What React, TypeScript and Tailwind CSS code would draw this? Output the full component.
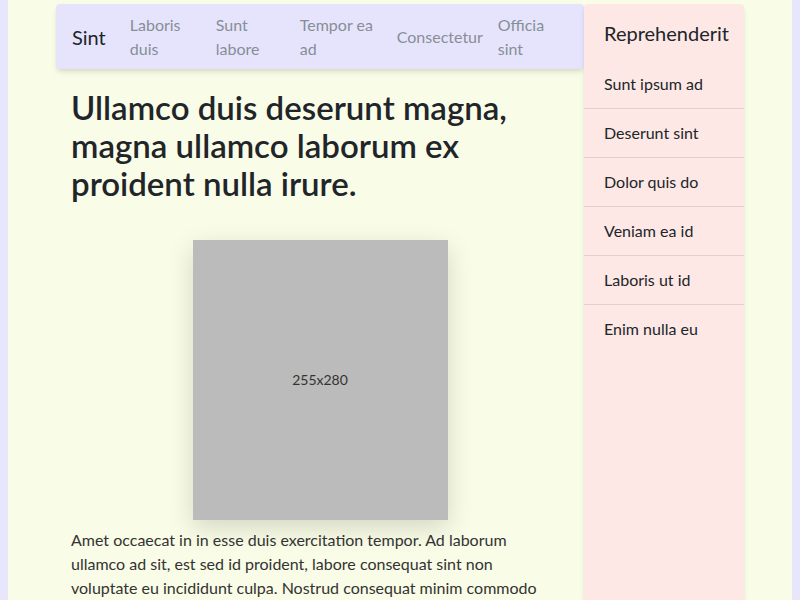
import React from "react";

const navLinks = [
  { label: "Laboris duis", width: "w-[86px]" },
  { label: "Sunt labore", width: "w-[84px]" },
  { label: "Tempor ea ad", width: "w-[97px]" },
  { label: "Consectetur", width: "w-[101px]" },
  { label: "Officia sint", width: "w-[78px]" },
];

const sideItems = [
  "Sunt ipsum ad",
  "Deserunt sint",
  "Dolor quis do",
  "Veniam ea id",
  "Laboris ut id",
  "Enim nulla eu",
];

const App: React.FC = () => {
  return (
    <div
      className="h-[600px] overflow-hidden bg-[#e8e6fc] px-2 text-[#212529]"
      style={{ fontFamily: 'Lato, "Noto Sans", sans-serif' }}
    >
      <div className="flex h-full justify-center bg-[#f9fce6]">
        <div className="flex w-[688px] pt-1">
          <main className="w-[528px] shrink-0">
            <nav className="flex h-[65px] items-center rounded bg-[#e6e4fc] px-4 shadow-md">
              <span className="mr-4 text-xl leading-[30px] text-[#212529]">Sint</span>
              {navLinks.map((link) => (
                <a
                  key={link.label}
                  href="#"
                  className={`${link.width} shrink-0 px-2 text-base leading-6 text-[#868e96]`}
                >
                  {link.label}
                </a>
              ))}
            </nav>

            <div className="pl-[15px] pr-[25px]">
              <h1 className="mt-[19px] text-[33px] font-semibold leading-[38px] text-[#212529]">
                Ullamco duis deserunt magna, magna ullamco laborum ex proident nulla irure.
              </h1>

              <div className="mt-[38px] flex justify-center pl-[10px]">
                <div className="flex h-[280px] w-[255px] items-center justify-center bg-[#bbbbbb] text-sm text-[#333] shadow-[0_8px_24px_rgba(0,0,0,0.15)]">
                  255x280
                </div>
              </div>

              <p className="mt-2 text-base leading-6 text-[#333]">
                Amet occaecat in in esse duis exercitation tempor. Ad laborum ullamco ad sit, est sed
                id proident, labore consequat sint non voluptate eu incididunt culpa. Nostrud
                consequat minim commodo pariatur consectetur occaecat elit.
              </p>
            </div>
          </main>

          <aside className="w-[160px] shrink-0 rounded-t bg-[#fde8e6] shadow-md">
            <h2 className="px-5 pb-3 pt-[14px] text-xl leading-[30px] text-[#212529]">
              Reprehenderit
            </h2>
            <ul>
              {sideItems.map((item, i) => (
                <li
                  key={item}
                  className={`px-5 py-3 text-base leading-6 text-[#212529] ${
                    i < sideItems.length - 1 ? "border-b border-[#e3cfcf]" : ""
                  }`}
                >
                  {item}
                </li>
              ))}
            </ul>
          </aside>
        </div>
      </div>
    </div>
  );
};

export default App;
